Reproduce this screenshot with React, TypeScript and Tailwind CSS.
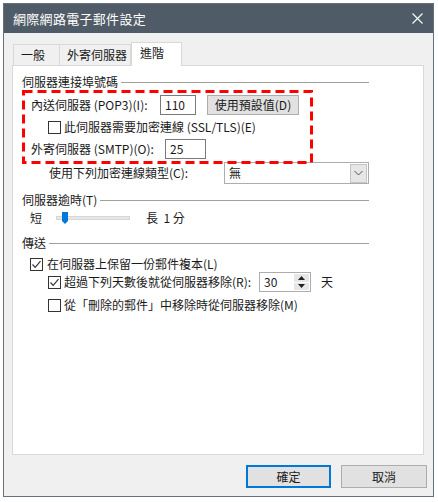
import React from "react";

const font = { fontFamily: '"Noto Sans CJK TC", "Noto Sans", sans-serif' };

function Check({ checked }: { checked?: boolean }) {
  return (
    <span className="w-[13px] h-[13px] border border-[#333333] bg-white flex items-center justify-center shrink-0">
      {checked && (
        <svg width="11" height="11" viewBox="0 0 11 11">
          <path d="M1.5 5.5 L4.2 8.3 L9.5 2.2" fill="none" stroke="#333333" strokeWidth="1.2" />
        </svg>
      )}
    </span>
  );
}

function Header({ text }: { text: string }) {
  return (
    <div className="flex items-center h-[16px] ml-[9px] w-[347px]">
      <span className="text-[12px] leading-[16px] text-[#1a1a1a] pr-[3px] whitespace-nowrap">{text}</span>
      <div className="flex-1 h-px bg-[#a0a0a0]" />
    </div>
  );
}

export default function App() {
  return (
    <div className="w-[438px] h-[502px] bg-white pt-[3px] pl-[3px]" style={font}>
      <div className="w-[431px] h-[494px] border border-[#66717c] bg-[#f0f0f0] flex flex-col">
        {/* Title bar */}
        <div className="h-[29px] bg-[#4f5b66] flex items-center pl-[9px] pr-[9px] shrink-0">
          <span className="text-[13px] text-white leading-none tracking-[0.3px]">網際網路電子郵件設定</span>
          <div className="flex-1" />
          <svg width="11" height="11" viewBox="0 0 11 11" className="mr-[1px]">
            <path d="M0.5 0.5 L10.5 10.5 M10.5 0.5 L0.5 10.5" stroke="#ffffff" strokeWidth="1.1" />
          </svg>
        </div>

        {/* Tabs */}
        <div className="mt-[9px] ml-[8px] flex items-end h-[23px] text-[12px] text-[#1a1a1a]">
          <div className="ml-[1px] w-[47px] h-[21px] border border-b-0 border-[#d9d9d9] bg-[#f0f0f0] pl-[7px] flex items-center leading-none">
            一般
          </div>
          <div className="w-[71px] h-[21px] border border-b-0 border-l-0 border-[#d9d9d9] bg-[#f0f0f0] pl-[7px] flex items-center leading-none">
            外寄伺服器
          </div>
          <div className="relative z-10 -mb-px w-[51px] h-[24px] border border-b-0 border-[#d9d9d9] bg-white pl-[8px] pb-[4px] flex items-center leading-none">
            進階
          </div>
        </div>

        {/* Panel */}
        <div className="relative ml-[8px] w-[412px] h-[390px] border border-[#d9d9d9] bg-white text-[12px] leading-[16px] text-[#1a1a1a] flex flex-col">
          <div className="mt-[8px]">
            <Header text="伺服器連接埠號碼" />
          </div>

          {/* row 1 */}
          <div className="mt-[4px] h-[22px] flex items-center pl-[18px]">
            <span className="w-[129px] whitespace-nowrap">內送伺服器 (POP3)(I):</span>
            <div className="w-[36px] h-[20px] border border-[#7a7a7a] bg-white pl-[4px] flex items-center">110</div>
            <div className="ml-[11px] w-[92px] h-[20px] border border-[#adadad] bg-[#e1e1e1] flex items-center justify-center">
              使用預設值(D)
            </div>
          </div>

          {/* row 2 */}
          <div className="mt-[3px] h-[16px] flex items-center pl-[35px] gap-[3px]">
            <Check />
            <span>此伺服器需要加密連線 (SSL/TLS)(E)</span>
          </div>

          {/* row 3 */}
          <div className="mt-[3px] h-[22px] flex items-center pl-[18px]">
            <span className="w-[134px] whitespace-nowrap">外寄伺服器 (SMTP)(O):</span>
            <div className="w-[41px] h-[20px] border border-[#7a7a7a] bg-white pl-[4px] flex items-center">25</div>
          </div>

          {/* row 4 */}
          <div className="mt-[2px] h-[22px] flex items-center pl-[36px]">
            <span className="w-[175px] whitespace-nowrap">使用下列加密連線類型(C):</span>
            <div className="w-[145px] h-[22px] border border-[#adadad] bg-white flex items-center pl-[4px] pr-[1px]">
              <span className="flex-1">無</span>
              <div className="w-[17px] h-[19px] border border-[#c4c4c4] bg-[#e6e6e6] flex items-center justify-center">
                <svg width="9" height="6" viewBox="0 0 9 6">
                  <path d="M0.5 1 L4.5 5 L8.5 1" fill="none" stroke="#555555" strokeWidth="1" />
                </svg>
              </div>
            </div>
          </div>

          <div className="mt-[8px]">
            <Header text="伺服器逾時(T)" />
          </div>

          {/* slider */}
          <div className="mt-[2px] h-[16px] flex items-center pl-[17px]">
            <span className="w-[26px]">短</span>
            <div className="relative w-[74px] h-[4px] bg-[#e7e7e7] border border-[#d6d6d6]">
              <svg className="absolute left-[5px] -top-[5px]" width="6" height="12" viewBox="0 0 6 12">
                <path d="M0 0 H6 V9 L3 12 L0 9 Z" fill="#0078d7" />
              </svg>
            </div>
            <span className="ml-[16px]">長&nbsp;&nbsp;1 分</span>
          </div>

          <div className="mt-[9px]">
            <Header text="傳送" />
          </div>

          {/* cb1 */}
          <div className="mt-[5px] h-[16px] flex items-center pl-[17px] gap-[4px]">
            <Check checked />
            <span>在伺服器上保留一份郵件複本(L)</span>
          </div>

          {/* cb2 */}
          <div className="mt-[0px] h-[20px] flex items-center pl-[35px]">
            <Check checked />
            <span className="ml-[3px] w-[195px] whitespace-nowrap">超過下列天數後就從伺服器移除(R):</span>
            <div className="w-[52px] h-[20px] border border-[#adadad] bg-white flex items-center pl-[4px] pr-[1px]">
              <span className="flex-1">30</span>
              <div className="w-[15px] h-[16px] flex flex-col gap-px">
                <div className="flex-1 bg-[#e6e6e6] flex items-center justify-center">
                  <svg width="7" height="4" viewBox="0 0 7 4"><path d="M0 4 L3.5 0 L7 4 Z" fill="#222" /></svg>
                </div>
                <div className="flex-1 bg-[#e6e6e6] flex items-center justify-center">
                  <svg width="7" height="4" viewBox="0 0 7 4"><path d="M0 0 L3.5 4 L7 0 Z" fill="#222" /></svg>
                </div>
              </div>
            </div>
            <span className="ml-[10px]">天</span>
          </div>

          {/* cb3 */}
          <div className="mt-[5px] h-[16px] flex items-center pl-[35px] gap-[3px]">
            <Check />
            <span>從「刪除的郵件」中移除時從伺服器移除(M)</span>
          </div>

          {/* red annotation */}
          <svg className="absolute left-[9px] top-[24px] pointer-events-none" width="291" height="74" viewBox="0 0 291 74">
            <rect x="1.5" y="1.5" width="288" height="71" fill="none" stroke="#ff0000" strokeWidth="3" strokeDasharray="9 5" />
          </svg>
        </div>

        {/* buttons */}
        <div className="mt-[10px] flex justify-end gap-[10px] pr-[6px] text-[12px] text-[#1a1a1a]">
          <div className="w-[85px] h-[23px] border-2 border-[#0078d7] bg-[#e1e1e1] flex items-center justify-center">確定</div>
          <div className="w-[86px] h-[23px] border border-[#adadad] bg-[#e1e1e1] flex items-center justify-center">取消</div>
        </div>
      </div>
    </div>
  );
}
